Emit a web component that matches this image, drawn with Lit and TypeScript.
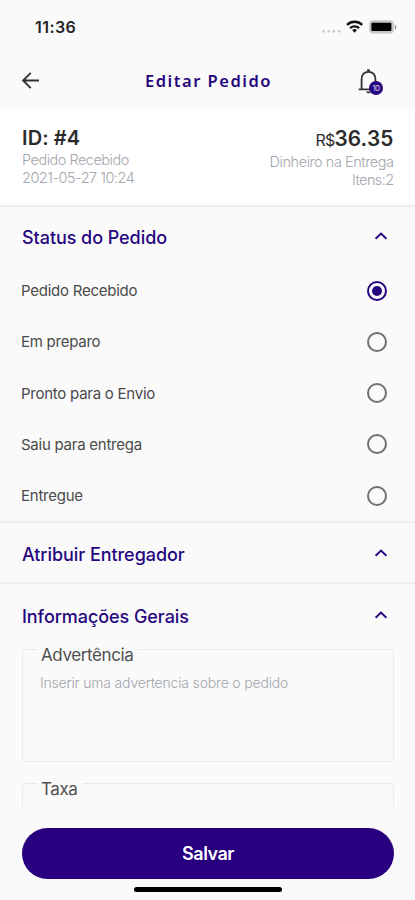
import { LitElement, html, css, svg } from "lit";
import { customElement, property } from "lit/decorators.js";

const chevron = html`<svg width="16" height="12" viewBox="0 0 16 12" fill="none">
  <path d="M2.6 8.8 8 3.6l5.4 5.2" stroke="#26067f" stroke-width="1.9" />
</svg>`;

@customElement("status-bar")
class StatusBar extends LitElement {
  static styles = css`
    :host { display: flex; height: 54px; align-items: center; justify-content: space-between; padding: 0 17px 0 35px; box-sizing: border-box; }
    .time { font-size: 16px; font-weight: 600; color: #222; letter-spacing: 0.45px; }
    svg { display: block; }
  `;
  render() {
    return html`<span class="time">11:36</span>
      <svg width="78" height="20" viewBox="0 0 78 20">
        ${[3.5, 8.7, 13.9, 19.1].map((x) => svg`<circle cx=${x} cy="14.3" r="1.4" fill="#c9c9c9" />`)}
        <g fill="none" stroke="#111" stroke-width="2.3">
          <path d="M27 7.8a11 11 0 0 1 15.2 0" />
          <path d="M30.1 11.2a6.6 6.6 0 0 1 9 0" />
        </g>
        <path d="M32.2 13a3.7 3.7 0 0 1 4.8 0L34.6 15.7z" fill="#111" />
        <rect x="49.2" y="3.2" width="24.6" height="13.4" rx="4" fill="#c6c6c6" />
        <rect x="51.4" y="5.8" width="20" height="8.2" rx="1" fill="#000" />
        <path d="M74.8 7.7c2 .8 2 4 0 4.8z" fill="#888" />
      </svg>`;
  }
}

@customElement("top-bar")
class TopBar extends LitElement {
  static styles = css`
    :host { display: grid; grid-template-columns: 60px 1fr 60px; align-items: center; height: 55px; box-sizing: border-box; padding-bottom: 2px; }
    .back { display: block; margin-left: 20px; }
    .title { text-align: center; font: 600 16.5px/24px "Noto Sans", sans-serif; letter-spacing: 1.5px; color: #26067f; padding: 0 0 0 2px; }
    .bell { position: relative; width: 28px; height: 30px; }
    .bell svg { display: block; }
    .count { position: absolute; left: 14px; top: 15px; width: 14px; height: 14px; border-radius: 50%; background: #26067f; color: #dcd6f0; font-size: 8px; line-height: 14px; text-align: center; letter-spacing: -0.6px; }
  `;
  render() {
    return html`<svg class="back" width="22" height="22" viewBox="0 0 22 22" fill="none" stroke="#333" stroke-width="1.9">
        <path d="M19 10.5H3.4M10.8 2.8 3.1 10.5l7.7 7.7" />
      </svg>
      <span class="title">Editar Pedido</span>
      <div class="bell">
        <svg width="28" height="30" viewBox="0 0 28 30" fill="none" stroke="#333" stroke-width="1.8">
          <path d="M3.7 23.4H22M6.6 23.4V13.5c0-4.6 2.4-7.7 6.9-7.7s6.9 3.1 6.9 7.7v9" />
          <path d="M13.5 3.3v2.6" stroke-width="2.8" />
          <path d="M11 25.5h5c-.4 2.4-4.4 2.4-5 0z" fill="#333" stroke="none" />
        </svg>
        <span class="count">10</span>
      </div>`;
  }
}

@customElement("order-summary")
class OrderSummary extends LitElement {
  static styles = css`
    :host { display: flex; justify-content: space-between; height: 98px; box-sizing: border-box; padding: 16px 21.5px 0 22px; background: #fff; border-bottom: 2px solid #ededed; }
    .right { text-align: right; }
    .main { font-size: 20px; line-height: 26px; font-weight: 600; color: #2b2b2b; }
    .price { letter-spacing: 0.15px; font-size: 20.8px; padding-top: 1px; line-height: 25px; }
    .id { letter-spacing: 0.1px; }
    .currency { font-size: 16px; font-weight: 400; letter-spacing: -0.8px; }
    .sub { font-size: 14.5px; line-height: 18px; font-weight: 300; color: #a3a6ae; }
    .state { letter-spacing: -0.5px; }
    .date { letter-spacing: -0.5px; }
    .pay { letter-spacing: -0.45px; }
    .items { letter-spacing: -0.6px; }
  `;
  render() {
    return html`<div>
        <div class="main id">ID: #4</div>
        <div class="sub state">Pedido Recebido</div>
        <div class="sub date">2021-05-27 10:24</div>
      </div>
      <div class="right">
        <div class="main price"><span class="currency">R$</span>36.35</div>
        <div class="sub pay">Dinheiro na Entrega</div>
        <div class="sub items">Itens:2</div>
      </div>`;
  }
}

@customElement("section-header")
class SectionHeader extends LitElement {
  @property() label = "";
  static styles = css`
    :host { display: flex; justify-content: space-between; align-items: center; height: 60px; padding: 0 26px 0 22px; }
    .label { font-size: 18px; font-weight: 500; color: #26067f; letter-spacing: -0.06px; }
    svg { display: block; margin-bottom: 3px; }
  `;
  render() {
    return html`<span class="label">${this.label}</span>${chevron}`;
  }
}

@customElement("status-option")
class StatusOption extends LitElement {
  @property() label = "";
  @property({ type: Boolean }) checked = false;
  static styles = css`
    :host { display: flex; justify-content: space-between; align-items: center; height: 51.25px; padding: 0 28px 0 21px; }
    .label { font-size: 15px; color: #4a4a4a; letter-spacing: -0.25px; }
    .radio { display: grid; place-items: center; box-sizing: border-box; width: 20px; height: 20px; border: 2px solid #707070; border-radius: 50%; }
    .radio.on { border-color: #26067f; }
    .dot { width: 10px; height: 10px; border-radius: 50%; background: #26067f; }
  `;
  render() {
    return html`<span class="label">${this.label}</span>
      <span class="radio ${this.checked ? "on" : ""}">${this.checked ? html`<span class="dot"></span>` : ""}</span>`;
  }
}

@customElement("app-root")
class AppRoot extends LitElement {
  static styles = css`
    :host { display: flex; flex-direction: column; width: 415px; height: 900px; overflow: hidden; background: #fafafa; font-family: Inter, sans-serif; }
    .scroll { height: 600px; overflow: hidden; flex: none; }
    .status { height: 316px; box-sizing: border-box; border-bottom: 2px solid #efefef; }
    .options { margin-top: -2.1px; }
    .assign { border-bottom: 2px solid #efefef; height: 61px; display: block; padding-top: 1px; box-sizing: border-box; }
    .general { padding-top: 2px; }
    .field { margin: 0 21px 5px 22px; padding: 0 0 0 14px; box-sizing: border-box; border: 1px solid #e9e9e9; border-radius: 3px; min-width: 0; }
    .field legend { font-size: 17px; line-height: 20px; color: #505050; padding: 12px 5px 0 4px; letter-spacing: -0.4px; }
    .note { height: 129px; margin-top: -13px; }
    .placeholder { margin: 8px 0 0 3px; font-size: 14px; line-height: 20px; font-weight: 300; color: #a0a5aa; letter-spacing: -0.18px; }
    .tax { height: 60px; }
    .save { flex: none; display: block; width: 372px; height: 51px; margin: 21px 0 0 22px; padding: 0; border: 0; border-radius: 26px; background: #28007f; color: #fff; font: 600 18px/51px Inter, sans-serif; letter-spacing: -0.5px; }
    .home { flex: none; width: 148px; height: 5px; border-radius: 3px; background: #000; margin: 8px 0 0 134px; }
  `;
  render() {
    const options = ["Pedido Recebido", "Em preparo", "Pronto para o Envio", "Saiu para entrega", "Entregue"];
    return html`<status-bar></status-bar>
      <top-bar></top-bar>
      <order-summary></order-summary>
      <div class="scroll">
        <section class="status">
          <section-header label="Status do Pedido"></section-header>
          <div class="options">
            ${options.map((o, i) => html`<status-option label=${o} ?checked=${i === 0}></status-option>`)}
          </div>
        </section>
        <section class="assign"><section-header label="Atribuir Entregador"></section-header></section>
        <section class="general">
          <section-header label="Informações Gerais"></section-header>
          <fieldset class="field note">
            <legend>Advertência</legend>
            <div class="placeholder">Inserir uma advertencia sobre o pedido</div>
          </fieldset>
          <fieldset class="field tax"><legend>Taxa</legend></fieldset>
        </section>
      </div>
      <button class="save">Salvar</button>
      <div class="home"></div>`;
  }
}
